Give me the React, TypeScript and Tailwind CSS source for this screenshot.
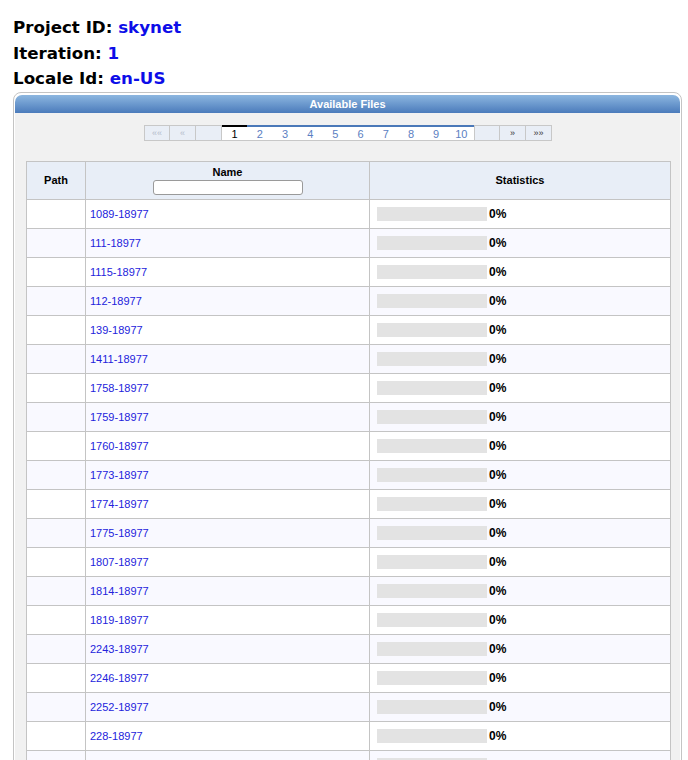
import React from "react";

const files = [
  "1089", "111", "1115", "112", "139", "1411", "1758", "1759", "1760", "1773",
  "1774", "1775", "1807", "1814", "1819", "2243", "2246", "2252", "228", "2290",
];

const pages = [1, 2, 3, 4, 5, 6, 7, 8, 9, 10];

const Pager: React.FC = () => (
  <div className="flex justify-center">
    <div className="flex h-[16px] text-[11px] leading-[14px] font-['Liberation_Sans',Arial,sans-serif]">
      <span className="w-[26px] border border-[#c8c8c8] bg-[#e9eef6] text-center text-[9px] text-[#b4bccb]">««</span>
      <span className="w-[26px] border-y border-r border-[#c8c8c8] bg-[#e9eef6] text-center text-[9px] text-[#b4bccb]">«</span>
      <span className="w-[26px] border-y border-r border-[#c8c8c8] bg-[#e9eef6]" />
      <div className="flex bg-white border-b border-[#c8c8c8]">
        {pages.map((p) => (
          <span
            key={p}
            className={
              p === 1
                ? "w-[25.2px] border-t-2 border-black text-center text-black"
                : "w-[25.2px] border-t-2 border-[#4a78b8] text-center text-[#5b80c2]"
            }
          >
            {p}
          </span>
        ))}
      </div>
      <span className="w-[26px] border border-[#c8c8c8] bg-[#e9eef6]" />
      <span className="w-[26px] border-y border-r border-[#c8c8c8] bg-[#e9eef6] text-center text-[9px] text-[#333]">»</span>
      <span className="w-[26px] border-y border-r border-[#c8c8c8] bg-[#e9eef6] text-center text-[9px] text-[#333]">»»</span>
    </div>
  </div>
);

export default function App() {
  return (
    <div className="min-h-[760px] bg-white">
      {/* Project info */}
      <div className="pl-[13px] pt-[15px] font-['DejaVu_Sans',sans-serif] text-[16.7px] font-bold leading-[25.5px] text-black">
        <div>
          Project ID: <span className="text-[#0d0de8]">skynet</span>
        </div>
        <div>
          Iteration: <span className="text-[#0d0de8]">1</span>
        </div>
        <div>
          Locale Id: <span className="text-[#0d0de8]">en-US</span>
        </div>
      </div>

      {/* Panel */}
      <div className="ml-[13px] mt-[0.5px] w-[669px] rounded-[8px] border border-[#c4c4c4] bg-white px-px pt-[2px] font-['Liberation_Sans',Arial,sans-serif]">
        <div className="h-[18px] rounded-t-[7px] bg-gradient-to-b from-[#8db7e0] to-[#4b7bbb] text-center text-[11px] font-bold leading-[18px] text-white">
          Available Files
        </div>
        <div className="bg-[#f1f1f1] pl-[11px] pr-[10px] pt-[12px] pb-4">
          <Pager />

          <table className="mt-[20px] w-[644px] table-fixed border-collapse text-[11px]">
            <thead>
              <tr className="h-[38px] bg-[#e8eef7]">
                <th className="w-[59px] border border-[#c4c4c4] font-bold text-black">Path</th>
                <th className="w-[284px] border border-[#c4c4c4] align-top pt-[4px] font-bold text-black">
                  <div className="leading-[13px]">Name</div>
                  <input className="mt-[1px] h-[15px] w-[150px] rounded-[3px] border border-[#9a9a9a] bg-white" />
                </th>
                <th className="w-[301px] border border-[#c4c4c4] font-bold text-black">Statistics</th>
              </tr>
            </thead>
            <tbody>
              {files.map((f, i) => (
                <tr key={f} className={i % 2 === 0 ? "h-[29px] bg-white" : "h-[29px] bg-[#f9f9ff]"}>
                  <td className="border border-[#c4c4c4]" />
                  <td className="border border-[#c4c4c4] pl-[4px]">
                    <a href="#" className="text-[#2323dc]">
                      {f}-18977
                    </a>
                  </td>
                  <td className="border border-[#c4c4c4] pl-[7px]">
                    <div className="flex items-center">
                      <div className="h-[14px] w-[110px] bg-[#e3e3e3]" />
                      <span className="ml-[2px] text-[12px] font-bold text-black">0%</span>
                    </div>
                  </td>
                </tr>
              ))}
            </tbody>
          </table>
        </div>
      </div>
    </div>
  );
}
